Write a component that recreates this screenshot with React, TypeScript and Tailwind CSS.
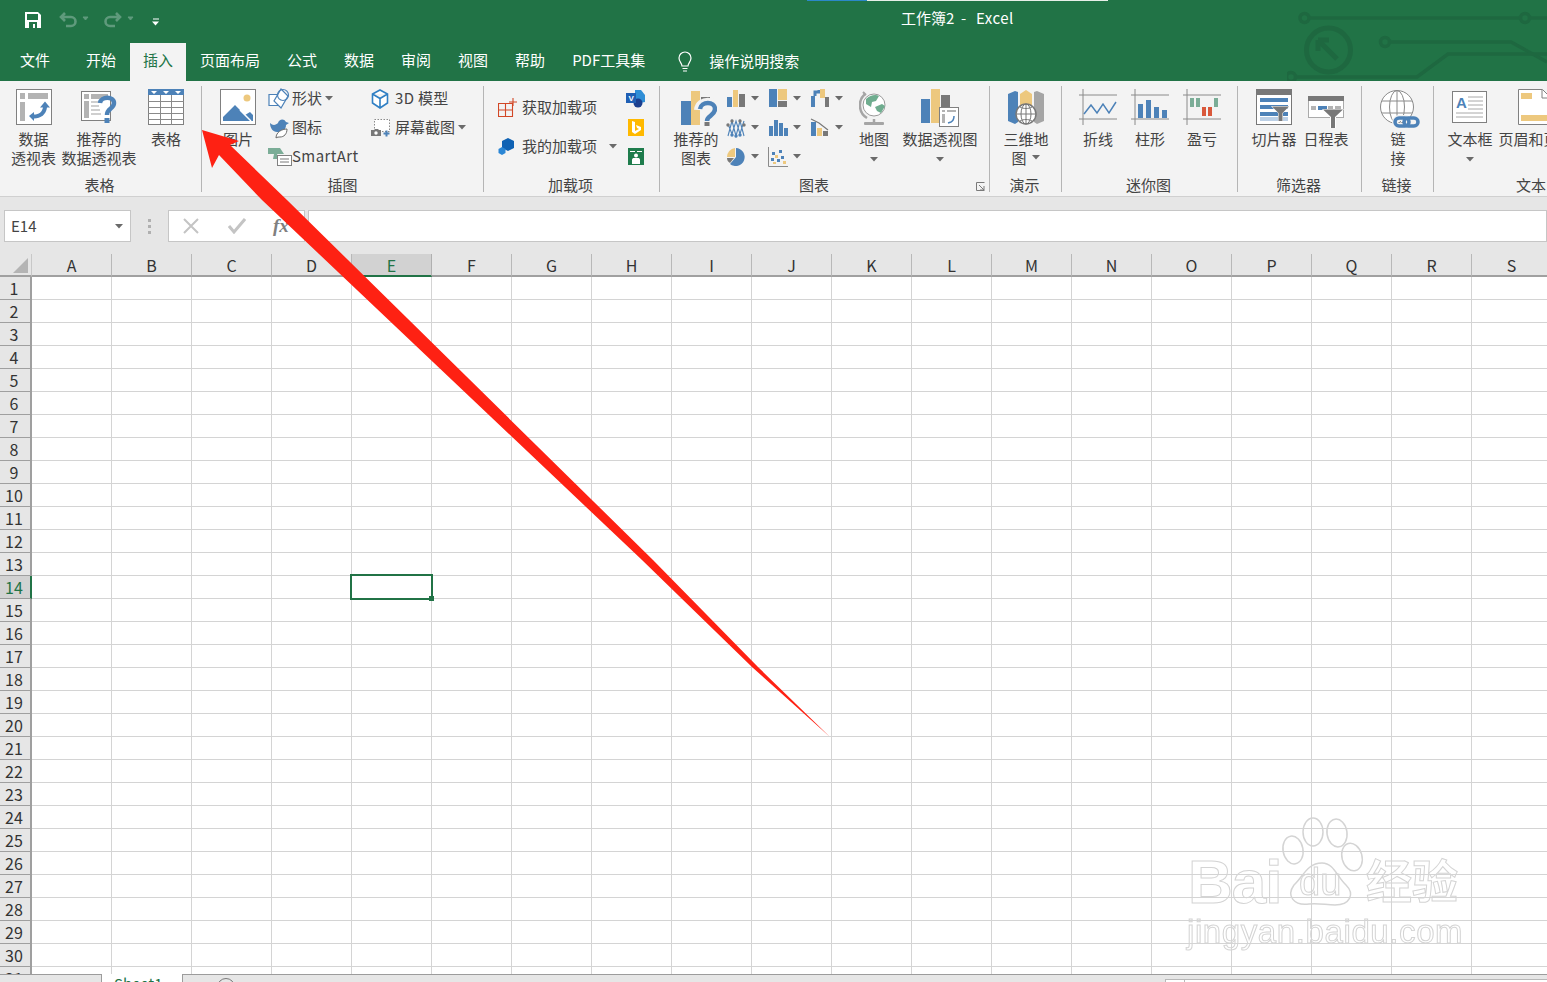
import React from "react";

const BLUE = "#4d82b8";
const TAN = "#edc87e";
const GRAY = "#787878";
const LIGHT = "#b3b3b3";

const columns = "ABCDEFGHIJKLMNOPQRS".split("");
const rows = Array.from({ length: 31 }, (_, i) => i + 1);

function Caret({ className = "" }: { className?: string }) {
  return (
    <svg width="8" height="5" viewBox="0 0 8 5" className={`shrink-0 ${className}`}>
      <path d="M0 0h8L4 4.500z" fill="#6a6a6a" />
    </svg>
  );
}

function Icon({ w = 36, h = 36, children }: { w?: number; h?: number; children: React.ReactNode }) {
  return (
    <svg width={w} height={h} viewBox={`0 0 ${w} ${h}`} className="shrink-0">
      {children}
    </svg>
  );
}

/* ================== Big ribbon icons ================== */

const PivotIcon = () => (
  <Icon>
    <rect x=".5" y=".5" width="35" height="35" fill="#fff" stroke="#808080" />
    <rect x="4" y="4" width="5" height="6" fill={LIGHT} />
    <rect x="12" y="4" width="20" height="6" fill={LIGHT} />
    <rect x="4" y="13" width="5" height="19" fill={LIGHT} />
    <path d="M13 27l5-4v2.500c5 0 8-2.500 9-7h-3l5-6 5 6h-3c-1 7-6 11-13 11v2.500z" fill={BLUE} />
  </Icon>
);

const RecommendPivotIcon = () => (
  <Icon>
    <rect x=".5" y="2.500" width="29" height="29" fill="#fff" stroke="#808080" />
    <rect x="3" y="5" width="5" height="5" fill={LIGHT} />
    <rect x="10" y="5" width="17" height="5" fill={LIGHT} />
    <rect x="3" y="12" width="5" height="17" fill={LIGHT} />
    <path d="M10 13h10M10 17h8M10 21h9M10 25h10" stroke="#cfcfcf" strokeWidth="2" />
    <path d="M19 14c1-7 14-7 14 0 0 6-7 5-7 12" fill="none" stroke={BLUE} strokeWidth="4.500" />
    <rect x="23.500" y="29" width="5" height="5" fill={BLUE} />
  </Icon>
);

const TableIcon = () => (
  <Icon>
    <rect x=".5" y=".5" width="35" height="35" fill="#fff" stroke="#808080" />
    <rect width="36" height="6" fill={BLUE} />
    <path d="M3 2h6L6 5zM15 2h6l-3 3zM27 2h6l-3 3z" fill="#fff" />
    <path d="M0 12.500h36M0 18.500h36M0 24.500h36M0 30.500h36M12.500 6v30M23.500 6v30" stroke="#8a8a8a" />
  </Icon>
);

const PictureIcon = () => (
  <Icon>
    <rect x=".5" y=".5" width="35" height="35" fill="#fff" stroke="#808080" />
    <circle cx="27" cy="9" r="3.500" fill={TAN} />
    <path d="M3 32v-4l12-12 10 10 5-3 3 3v6z" fill={BLUE} />
    <path d="M20 21l11 11" stroke="#fff" strokeWidth="1.500" />
  </Icon>
);

const RecommendChartIcon = () => (
  <Icon w={42} h={38}>
    <g transform="translate(6 2)">
      <rect x="0" y="10" width="10" height="24" fill={BLUE} />
      <rect x="10" y="0" width="9" height="34" fill={TAN} />
      <rect x="20" y="6" width="9" height="4" fill={GRAY} />
      <path d="M17 19c1-11 19-11 19 0 0 8-8 6-8 13" fill="none" stroke="#f3f3f3" strokeWidth="8" />
      <path d="M19 18c1-8 15-8 15 0 0 7-8 6-8 12" fill="none" stroke={BLUE} strokeWidth="4.500" />
      <rect x="23.500" y="31" width="5" height="4" fill={GRAY} />
    </g>
  </Icon>
);

const GlobeIcon = () => (
  <Icon w={30} h={38}>
    <circle cx="15" cy="16" r="11" fill="#fff" stroke="#9a9a9a" />
    <path d="M7 10c4-4 10-5 13-3l-3 5-4 1-1 5-5-3zM16 18l7-3 3 2-4 7-4-2z" fill="#6fad8f" />
    <path d="M6 5A15 15 0 0 0 8 29" fill="none" stroke="#a5a5a5" strokeWidth="2.500" />
    <path d="M4 3l3 3" stroke="#a5a5a5" strokeWidth="2" />
    <path d="M15 30v4" stroke="#a5a5a5" strokeWidth="2.500" />
    <rect x="5" y="33" width="20" height="3" rx="1" fill="#a5a5a5" />
  </Icon>
);

const PivotChartIcon = () => (
  <Icon w={38} h={38}>
    <rect x="0" y="10" width="9" height="24" fill={BLUE} />
    <rect x="10" y="0" width="9" height="34" fill={TAN} />
    <rect x="20" y="6" width="9" height="13" fill={GRAY} />
    <rect x="18.500" y="18.500" width="19" height="19" fill="#fff" stroke="#808080" />
    <path d="M21 21h3v2h-3zM26 21h9v2h-9zM21 25h3v9h-3z" fill={LIGHT} />
    <path d="M27 34l3-1c2-1 3-3 3-6" fill="none" stroke={BLUE} strokeWidth="1.500" />
  </Icon>
);

const Map3dIcon = () => (
  <Icon w={36} h={38}>
    <path d="M0 5l7-3 3 1v30l-3 2-7-3z" fill={BLUE} />
    <path d="M12 5l6-4 6 4v14H12z" fill={TAN} />
    <path d="M26 3l3-1 7 3v27l-7 3-3-2z" fill="#a5a5a5" />
    <circle cx="18" cy="25" r="10" fill="#fff" stroke={GRAY} strokeWidth="1.500" />
    <path d="M8 25h20M18 15v20M12 18c4 2 8 2 12 0M12 32c4-2 8-2 12 0" stroke={GRAY} fill="none" />
    <ellipse cx="18" cy="25" rx="5" ry="10" fill="none" stroke={GRAY} />
  </Icon>
);

const SparkFrame = () => (
  <path d="M4 0v36M0 6h38M0 30h38" stroke="#8a8a8a" fill="none" />
);

const SparkLineIcon = () => (
  <Icon w={38}>
    <SparkFrame />
    <path d="M5 25l7-9 6 8 6-9 6 9 7-11" fill="none" stroke={BLUE} strokeWidth="1.500" />
  </Icon>
);

const SparkColumnIcon = () => (
  <Icon w={38}>
    <SparkFrame />
    <path d="M7 15h5v14H7zM15 11h5v18h-5zM23 18h5v11h-5zM31 21h5v8h-5z" fill={BLUE} />
  </Icon>
);

const SparkWinLossIcon = () => (
  <Icon w={38}>
    <SparkFrame />
    <path d="M7 9h4v9H7zM13 9h4v9h-4zM31 9h4v9h-4z" fill="#7bad97" />
    <path d="M19 18h4v9h-4zM25 18h4v9h-4z" fill="#d9583b" />
  </Icon>
);

const SlicerIcon = () => (
  <Icon>
    <rect x=".5" y=".5" width="35" height="35" fill="#fff" stroke="#777" />
    <rect width="36" height="6" fill={GRAY} />
    <rect x="4" y="9" width="28" height="4" fill={BLUE} />
    <rect x="4" y="16" width="28" height="4" fill={BLUE} />
    <rect x="4" y="23" width="28" height="4" fill={BLUE} />
    <rect x="4" y="28" width="28" height="4" fill="#bcd0e6" />
    <path d="M15 17h19l-7 7v10h-5V24z" fill="#fff" />
    <path d="M16 17.500h17l-6.500 6.500v8h-4v-8z" fill={GRAY} />
  </Icon>
);

const TimelineIcon = () => (
  <Icon h={40}>
    <rect x=".5" y="7.500" width="35" height="21" fill="#fff" stroke="#aaa" />
    <rect y="7" width="36" height="5" fill={GRAY} />
    <path d="M3 17h5v4H3zM20 17h5v4h-5zM27 17h6v4h-6z" fill={LIGHT} />
    <path d="M10 17h5v4h-5zM15 17h4v4h-4z" fill={BLUE} />
    <path d="M14 20h22l-8 8v11h-6V28z" fill="#fff" />
    <path d="M15 20.500h20l-8 7.500v11h-4V28z" fill={GRAY} />
  </Icon>
);

const LinkIcon = () => (
  <Icon w={44} h={40}>
    <circle cx="21" cy="18" r="16.500" fill="#fff" stroke="#8a8a8a" />
    <ellipse cx="21" cy="18" rx="7.500" ry="16.500" fill="none" stroke="#8a8a8a" />
    <path d="M6 12h30M6 24h30M21 2v32" stroke="#8a8a8a" />
    <rect x="19" y="29" width="14" height="8" rx="4" fill="none" stroke="#f3f3f3" strokeWidth="6" />
    <rect x="19" y="29" width="14" height="8" rx="4" fill="none" stroke={BLUE} strokeWidth="3.500" />
    <rect x="28" y="29" width="14" height="8" rx="4" fill="none" stroke={BLUE} strokeWidth="3.500" />
  </Icon>
);

const TextBoxIcon = () => (
  <Icon>
    <rect x=".5" y="2.500" width="34" height="31" fill="#fff" stroke="#808080" />
    <text x="4" y="19" fontSize="15" fontWeight="700" fill={BLUE} fontFamily="Liberation Sans, sans-serif">A</text>
    <path d="M16 8h15M16 12h15M16 16h15M16 20h15M4 24h27M4 28h27" stroke="#a8a8a8" />
  </Icon>
);

const HeaderFooterIcon = () => (
  <Icon>
    <path d="M.5.500h24l8 8v27H.5z" fill="#fff" stroke="#808080" />
    <path d="M24 1v8h8" fill="#fff" stroke="#808080" />
    <rect x="3" y="4" width="11" height="6" fill={TAN} />
    <rect x="3" y="26" width="27" height="6" fill={TAN} />
  </Icon>
);

/* ================== Small ribbon icons ================== */

const ShapesIcon = () => (
  <Icon w={22} h={22}>
    <path d="M1 6.500h13v11H1z" fill="#fff" stroke={BLUE} strokeWidth="1.200" />
    <path d="M13 1l7 7-7 12-7-7z" fill="#fff" stroke={BLUE} strokeWidth="1.200" />
    <circle cx="15" cy="7" r="5.500" fill="none" stroke={BLUE} strokeWidth="1.200" />
  </Icon>
);

const BirdIcon = () => (
  <Icon w={22} h={22}>
    <path d="M2 6c3 3 6 2 8 0 1-4 6-5 8-1l3 1-3 2c0 5-4 7-9 7-4 0-7-4-7-9z" fill={BLUE} />
    <path d="M8 21c0-6 6-9 11-9 0 5-3 8-7 8-1 0-3 0-4 1z" fill="#fff" stroke="#6a6a6a" />
  </Icon>
);

const SmartArtIcon = () => (
  <Icon w={24} h={20}>
    <path d="M0 1h12l4 6h-7l2 5H5L6 7H0z" fill="#7bad97" />
    <rect x="9.500" y="8.500" width="14" height="10" fill="#fff" stroke="#808080" />
    <path d="M12 12h9M12 15h9" stroke={GRAY} />
  </Icon>
);

const CubeIcon = () => (
  <Icon w={18} h={20}>
    <path d="M9 1l7.500 4v9L9 19l-7.500-5V5zM1.500 5L9 9.500 16.500 5M9 9.500V19" fill="#fff" stroke="#2f7fc4" strokeWidth="1.600" />
  </Icon>
);

const ScreenshotIcon = () => (
  <Icon w={20} h={20}>
    <rect x="3.500" y="1.500" width="15" height="12" fill="#fff" stroke="#8a8a8a" strokeDasharray="1.500 1.500" />
    <path d="M0 12h3l1-1h3l1 1h2v6H0z" fill={GRAY} />
    <circle cx="5" cy="15" r="1.700" fill="#fff" />
    <path d="M15.500 12.500v6M12.500 15.500h6" stroke={BLUE} strokeWidth="2" />
  </Icon>
);

const StoreIcon = () => (
  <Icon w={20} h={20}>
    <path d="M.5 5.500h14v13H.5zM.5 12h14M7.500 5.500v13" fill="none" stroke="#d24726" strokeWidth="1.100" />
    <path d="M15 0v8M11 4h8" stroke="#d24726" strokeWidth="1.100" />
  </Icon>
);

const MyAddinIcon = () => (
  <Icon w={18} h={18}>
    <path d="M10 0l6 3v7l-6 3-6-3V3z" fill="#0f62b4" />
    <path d="M4 9l3.500 2v4L4 17l-3.500-2v-4z" fill="#2a86d5" />
  </Icon>
);

const VisioIcon = () => (
  <Icon w={20} h={18}>
    <path d="M9 0h6l4 5v7l-5 1-5-4z" fill="#2f8ed6" />
    <circle cx="12" cy="13" r="4.500" fill="#1b3f8f" />
    <rect y="3" width="10" height="10" fill="#1f5fb4" />
    <text x="2.500" y="11" fontSize="8" fontWeight="700" fill="#fff" fontFamily="Liberation Sans, sans-serif">V</text>
  </Icon>
);

const BingIcon = () => (
  <Icon w={16} h={17}>
    <rect width="16" height="17" fill="#ffb900" />
    <path d="M4 2l3 1v9l4-2-2-1-1-3 5 2v3l-6 4-3-2z" fill="#fff" />
  </Icon>
);

const PeopleGraphIcon = () => (
  <Icon w={16} h={17}>
    <rect width="16" height="17" fill="#1e7c4c" />
    <path d="M2 3h5v1H2zM9 3h5v1H9z" fill="#fff" />
    <circle cx="8" cy="7.500" r="2" fill="#fff" />
    <path d="M4 16v-4c0-1.500 1-2 2-2h4c1 0 2 .500 2 2v4z" fill="#fff" />
  </Icon>
);

function ChartGlyph({ type }: { type: string }) {
  return (
    <Icon w={20} h={20}>
      {type === "column" && (
        <>
          <rect x="1" y="8" width="5" height="10" fill={BLUE} />
          <rect x="7" y="1" width="5" height="17" fill={TAN} />
          <rect x="13" y="5" width="6" height="13" fill={GRAY} />
        </>
      )}
      {type === "tree" && (
        <>
          <rect x="1" y="0" width="8" height="18" fill={BLUE} />
          <rect x="10" y="0" width="9" height="11" fill={TAN} />
          <rect x="10" y="12" width="9" height="6" fill={GRAY} />
        </>
      )}
      {type === "water" && (
        <>
          <rect x="1" y="7" width="4" height="11" fill={BLUE} />
          <path d="M5 7V3h4V1" stroke={BLUE} strokeWidth="3" fill="none" />
          <rect x="10" y="0" width="5" height="9" fill={TAN} />
          <rect x="15" y="8" width="4" height="10" fill={GRAY} />
        </>
      )}
      {type === "line" && (
        <>
          <path d="M2 18L6 3l4 15 4-15 4 15M2 6l4 10 4-13 4 13 4-13" fill="none" stroke={BLUE} strokeWidth="1.100" />
          <circle cx="6" cy="3" r="1.700" fill={GRAY} />
          <circle cx="14" cy="3" r="1.700" fill={GRAY} />
          <circle cx="2" cy="7" r="1.700" fill={GRAY} />
          <circle cx="18" cy="7" r="1.700" fill={GRAY} />
          <circle cx="6" cy="17" r="1.700" fill={BLUE} />
          <circle cx="14" cy="17" r="1.700" fill={BLUE} />
          <circle cx="10" cy="18" r="1.700" fill={BLUE} />
        </>
      )}
      {type === "hist" && (
        <path d="M1 8h4v10H1zM6 2h4v16H6zM11 5h4v13h-4zM16 10h4v8h-4z" fill={BLUE} />
      )}
      {type === "pareto" && (
        <>
          <rect x="1" y="4" width="5" height="14" fill={BLUE} />
          <rect x="7" y="10" width="5" height="8" fill={TAN} />
          <rect x="13" y="13" width="5" height="5" fill={GRAY} />
          <path d="M1 1l8 4 9 7" fill="none" stroke={GRAY} strokeWidth="1.200" />
        </>
      )}
      {type === "pie" && (
        <>
          <path d="M10 1a9 9 0 1 1-6 16l6-7z" fill={BLUE} />
          <path d="M9 1a9 9 0 0 0-8 9h8z" fill={TAN} />
          <path d="M1 11h7l-4 5c-2-1-3-3-3-5z" fill={GRAY} />
        </>
      )}
      {type === "scatter" && (
        <>
          <path d="M.5 0v19.500H20" fill="none" stroke="#8a8a8a" />
          <path d="M4 5h3v3H4zM11 3h3v3h-3zM3 11h3v3H3zM13 9h3v3h-3zM9 12h3v3H9z" fill={BLUE} />
          <path d="M7 8h3v3H7zM15 14h3v3h-3zM5 15h3v2H5z" fill={TAN} />
        </>
      )}
    </Icon>
  );
}

/* ================== Ribbon layout ================== */

function Group({ width, label, labelClass = "pr-[3px]", children }: any) {
  return (
    <div className="relative flex h-full shrink-0 flex-col" style={{ width }}>
      <div className="flex h-[94px] min-w-0">{children}</div>
      <div className={`text-center text-[15px] leading-[20px] ${labelClass}`}>{label}</div>
      <div className="absolute right-0 top-[5px] h-[106px] w-px bg-[#b5b5b5]" />
    </div>
  );
}

function Big({ width, icon, lines, caret, iconH = 38 }: any) {
  return (
    <div className="flex shrink-0 flex-col items-center pt-[8px]" style={{ width }}>
      <div className="flex items-start justify-center" style={{ height: iconH }}>
        {icon}
      </div>
      <div className="mt-[2px] whitespace-nowrap text-center text-[15px] leading-[19px]">
        {lines.map((l: React.ReactNode, i: number) => (
          <div key={i}>{l}</div>
        ))}
      </div>
      {caret && <Caret className="mt-[9px]" />}
    </div>
  );
}

function Small({ icon, text, caret, iconBox = "w-[24px]", className = "" }: any) {
  return (
    <div className={`flex h-[29px] items-center whitespace-nowrap text-[15px] ${className}`}>
      <div className={`flex shrink-0 items-center ${iconBox}`}>{icon}</div>
      <span>{text}</span>
      {caret && <Caret className="ml-[3px]" />}
    </div>
  );
}

function ChartPick({ type }: { type: string }) {
  return (
    <div className="flex h-[29px] w-[42px] items-center gap-[5px]">
      <ChartGlyph type={type} />
      <Caret />
    </div>
  );
}

function Ribbon() {
  return (
    <div className="flex h-[115px] shrink-0 overflow-hidden bg-[#f3f3f3] text-[#444444]">
      <Group width={202} label="表格">
        <div className="w-[7px]" />
        <Big width={53} icon={<PivotIcon />} lines={["数据", "透视表"]} />
        <Big width={78} icon={<RecommendPivotIcon />} lines={["推荐的", "数据透视表"]} />
        <Big width={56} icon={<TableIcon />} lines={["表格"]} />
      </Group>

      <Group width={282} label="插图" labelClass="pr-[1px]">
        <div className="w-[14px]" />
        <Big width={44} icon={<PictureIcon />} lines={["图片"]} />
        <div className="ml-[8px] w-[103px] pt-[3px]">
          <Small icon={<ShapesIcon />} text="形状" caret />
          <Small icon={<BirdIcon />} text="图标" />
          <Small icon={<SmartArtIcon />} text={<span className="tracking-[0.4px]">SmartArt</span>} />
        </div>
        <div className="pt-[3px]">
          <Small icon={<CubeIcon />} text={<span className="tracking-[0.3px]">3D 模型</span>} />
          <Small icon={<ScreenshotIcon />} text="屏幕截图" caret />
        </div>
      </Group>

      <Group width={176} label="加载项">
        <div className="w-[131px] pl-[14px] pt-[12px]">
          <Small icon={<StoreIcon />} text="获取加载项" />
          <div className="h-[10px]" />
          <div className="flex items-center">
            <Small icon={<MyAddinIcon />} text="我的加载项" />
            <Caret className="ml-[12px]" />
          </div>
        </div>
        <div className="flex flex-col items-center pl-[11px] pt-[3px]">
          <div className="flex h-[29px] items-center"><VisioIcon /></div>
          <div className="flex h-[29px] items-center"><BingIcon /></div>
          <div className="flex h-[29px] items-center"><PeopleGraphIcon /></div>
        </div>
      </Group>

      <Group width={330} label="图表" labelClass="pr-[22px]">
        <div className="w-[11px]" />
        <Big width={50} icon={<RecommendChartIcon />} lines={["推荐的", "图表"]} />
        <div className="ml-[5px] grid h-[87px] grid-cols-[42px_42px_42px] pt-[3px]">
          {["column", "tree", "water", "line", "hist", "pareto", "pie", "scatter"].map((t) => (
            <ChartPick key={t} type={t} />
          ))}
        </div>
        <Big width={44} icon={<GlobeIcon />} lines={["地图"]} caret />
        <div className="w-[5px]" />
        <Big width={78} icon={<PivotChartIcon />} lines={["数据透视图"]} caret />
        <svg width="9" height="9" viewBox="0 0 9 9" className="absolute bottom-[5px] right-[5px]">
          <path d="M.5 8.500v-8h8M3 3l5 5M8 4v4H4M.5 8.500h8" fill="none" stroke="#7a7a7a" />
        </svg>
      </Group>

      <Group width={72} label="演示">
        <Big
          width={72}
          icon={<Map3dIcon />}
          lines={[
            "三维地",
            <span key="m" className="flex items-center justify-center gap-[5px] pr-[1px]">
              图
              <Caret />
            </span>,
          ]}
        />
      </Group>

      <Group width={176} label="迷你图">
        <div className="w-[10px]" />
        <Big width={52} icon={<SparkLineIcon />} lines={["折线"]} />
        <Big width={52} icon={<SparkColumnIcon />} lines={["柱形"]} />
        <Big width={52} icon={<SparkWinLossIcon />} lines={["盈亏"]} />
      </Group>

      <Group width={124} label="筛选器">
        <div className="w-[11px]" />
        <Big width={50} icon={<SlicerIcon />} lines={["切片器"]} />
        <Big width={54} icon={<TimelineIcon />} lines={["日程表"]} />
      </Group>

      <Group width={72} label="链接">
        <Big width={72} iconH={38} icon={<LinkIcon />} lines={["链", "接"]} />
      </Group>

      <Group width={200} label="文本" labelClass="pr-[6px]">
        <div className="w-[10px]" />
        <Big width={52} icon={<TextBoxIcon />} lines={["文本框"]} caret />
        <Big width={80} icon={<HeaderFooterIcon />} lines={["页眉和页脚"]} />
      </Group>
    </div>
  );
}

/* ================== Title + tabs ================== */

function CircuitBackdrop() {
  return (
    <svg width="260" height="81" viewBox="0 0 260 81" className="absolute right-0 top-0" fill="none" stroke="#1e6840" strokeWidth="3.500">
      <circle cx="17.500" cy="18" r="4.500" />
      <path d="M22 18h211" />
      <circle cx="238" cy="18" r="4.500" />
      <path d="M243 18h17" />
      <circle cx="41.500" cy="50" r="22" strokeWidth="5" />
      <path d="M31 40l19 19M31 40v11M31 40h11" strokeWidth="5" />
      <circle cx="98" cy="42" r="4.500" />
      <path d="M103 42h121l36 20" />
      <circle cx="4" cy="77" r="4.500" />
      <path d="M9 77h121l31-23h99" />
    </svg>
  );
}

function TitleBar() {
  return (
    <div className="relative flex h-[43px] shrink-0 items-start">
      <div className="absolute left-[807px] top-0 h-px w-[60px] bg-[#2b88c8]" />
      <div className="absolute left-[867px] top-0 h-px w-[241px] bg-[#e8efe9]" />
      <div className="ml-[25px] mt-[12px] flex items-center">
        <svg width="16" height="16" viewBox="0 0 16 16">
          <path d="M0 0h13l3 3v13H0z" fill="#fff" />
          <rect x="2" y="2" width="11" height="6" fill="#217346" />
          <rect x="4" y="10" width="8" height="6" fill="#217346" />
          <rect x="8" y="12" width="2" height="4" fill="#fff" />
        </svg>
        <svg width="30" height="16" viewBox="0 0 30 16" className="ml-[18px]" fill="none" stroke="#5f9a7c" strokeWidth="2.600">
          <path d="M2 5h10a4.500 4.500 0 0 1 0 9H7M6 1L2 5l4 4" />
          <path d="M24 5l5 0-2.500 3z" fill="#5f9a7c" strokeWidth="1" />
        </svg>
        <svg width="32" height="16" viewBox="0 0 32 16" className="ml-[13px]" fill="none" stroke="#5f9a7c" strokeWidth="2.600">
          <path d="M18 5H8a4.500 4.500 0 0 0 0 9h5M14 1l4 4-4 4" />
          <path d="M26 5l5 0-2.500 3z" fill="#5f9a7c" strokeWidth="1" />
        </svg>
        <svg width="8" height="8" viewBox="0 0 8 8" className="ml-[18px] mt-[3px]">
          <path d="M1 .500h6v1H1zM0 3.500h7L3.500 7.500z" fill="#fff" />
        </svg>
      </div>
      <div className="absolute left-[901px] top-[8px] whitespace-nowrap text-[15px] leading-[20px] text-white">
        工作簿2&nbsp;&nbsp;-&nbsp;&nbsp;<span className="ml-[3px] tracking-[0.5px]">Excel</span>
      </div>
    </div>
  );
}

function Tabs() {
  const tabs = ["开始", "插入", "页面布局", "公式", "数据", "审阅", "视图", "帮助", "PDF工具集"];
  return (
    <div className="relative flex h-[38px] shrink-0 text-[15px] text-white">
      <div className="flex w-[73px] shrink-0 items-center pl-[20px] pb-[3px]">文件</div>
      <div className="flex gap-px">
        {tabs.map((t) => (
          <div
            key={t}
            className={`flex items-center whitespace-nowrap px-[13px] pb-[3px] ${t === "插入" ? "bg-[#f3f3f3] text-[#217346]" : ""}`}
          >
            {t}
          </div>
        ))}
      </div>
      <div className="ml-[18px] flex items-center pb-[1px]">
        <svg width="18" height="22" viewBox="0 0 18 22" fill="none" stroke="#fff" strokeWidth="1.200">
          <path d="M6 15c0-3-3-4-3-8a6 6 0 0 1 12 0c0 4-3 5-3 8z" />
          <path d="M6.500 17.500h5M7 20h4" />
        </svg>
        <span className="ml-[15px]">操作说明搜索</span>
      </div>
    </div>
  );
}

/* ================== Formula bar + sheet ================== */

function FormulaBar() {
  return (
    <div className="flex h-[45px] shrink-0 bg-[#e6e6e6] pl-[4px] pt-[13px]">
      <div className="flex h-[32px] w-[127px] items-center justify-between border border-[#c6c6c6] bg-white pl-[6px] pr-[7px] text-[15px] text-[#444444]">
        E14
        <Caret />
      </div>
      <div className="flex w-[37px] flex-col items-center justify-center gap-[3px]">
        <div className="h-[3px] w-[3px] bg-[#b0b0b0]" />
        <div className="h-[3px] w-[3px] bg-[#b0b0b0]" />
        <div className="h-[3px] w-[3px] bg-[#b0b0b0]" />
      </div>
      <div className="flex h-[32px] w-[137px] items-center border border-[#c6c6c6] bg-white">
        <svg width="16" height="16" viewBox="0 0 16 16" className="ml-[14px]" fill="none" stroke="#c4c4c4" strokeWidth="2">
          <path d="M1 1l14 14M15 1L1 15" />
        </svg>
        <svg width="18" height="16" viewBox="0 0 18 16" className="ml-[29px]" fill="none" stroke="#c4c4c4" strokeWidth="3">
          <path d="M1 8l5 6L17 1" />
        </svg>
        <span className="ml-[27px] font-['Liberation_Serif',serif] text-[19px] font-bold italic text-[#808080]">fx</span>
      </div>
      <div className="ml-[3px] h-[32px] flex-1 border border-[#c6c6c6] bg-white" />
    </div>
  );
}

function Sheet() {
  return (
    <div className="min-h-0 flex-1 overflow-hidden bg-[#e6e6e6] pt-[12px]">
      <div className="grid grid-cols-[32px_repeat(19,80px)] auto-rows-[23px]">
        <div className="relative border-b-2 border-r border-b-[#a0a0a0] border-r-[#c8c8c8]">
          <svg width="16" height="16" viewBox="0 0 16 16" className="absolute left-[13px] top-[4px]">
            <path d="M15 0v15H0z" fill="#b4b4b4" />
          </svg>
        </div>
        {columns.map((c) => (
          <div
            key={c}
            className={`flex items-center justify-center border-b-2 border-r pt-[1px] text-[16px] ${
              c === "E"
                ? "border-b-[#217346] border-r-[#b0b0b0] bg-[#d2d2d2] text-[#217346]"
                : "border-b-[#a0a0a0] border-r-[#b8b8b8] text-[#333333]"
            }`}
          >
            {c}
          </div>
        ))}
        {rows.map((r) => (
          <React.Fragment key={r}>
            <div
              className={`flex items-center justify-center border-b border-r-2 pr-[2px] text-[16px] ${
                r === 14
                  ? "border-b-[#9a9a9a] border-r-[#217346] bg-[#d2d2d2] text-[#217346]"
                  : "border-b-[#9f9f9f] border-r-[#9f9f9f] text-[#333333]"
              }`}
            >
              {r}
            </div>
            {columns.map((c) => (
              <div key={c} className="relative border-b border-r border-[#d4d4d4] bg-white">
                {c === "E" && r === 14 && (
                  <div className="absolute -left-[2px] -top-[2px] z-10 h-[26px] w-[83px] border-2 border-[#217346]">
                    <div className="absolute -bottom-[3px] -right-[3px] h-[5px] w-[5px] bg-[#217346]" />
                  </div>
                )}
              </div>
            ))}
          </React.Fragment>
        ))}
      </div>
    </div>
  );
}

function SheetTabs() {
  return (
    <div className="flex h-[8px] shrink-0 bg-[#e6e6e6]">
      <div className="w-[102px] border-t border-r border-[#9c9c9c]" />
      <div className="w-[80px] overflow-hidden bg-white pl-[12px] text-[15px] leading-[20px] text-[#217346]">
        Sheet1
      </div>
      <div className="relative flex-1 border-l border-t border-[#9c9c9c]">
        <div className="absolute left-[34px] top-[3px] h-[18px] w-[18px] rounded-full border border-[#7a7a7a]" />
        <div className="absolute left-[982px] top-[4px] h-[4px] w-[383px] border-l border-t border-[#b8b8b8] bg-white" />
        <div className="absolute left-[1001px] top-[4px] h-[4px] w-px bg-[#b8b8b8]" />
      </div>
    </div>
  );
}

/* ================== Overlays ================== */

function Watermark() {
  const letters = "font-['Liberation_Sans',sans-serif] text-transparent [-webkit-text-stroke:1px_#d4d4d4]";
  return (
    <div className="pointer-events-none absolute left-[1180px] top-[812px] h-[145px] w-[290px] blur-[0.4px]">
      <svg width="110" height="100" viewBox="0 0 110 100" className="absolute left-[85px] top-[3px]" fill="none" stroke="#d4d4d4" strokeWidth="1.500">
        <ellipse cx="28" cy="35" rx="10" ry="14" transform="rotate(-10 28 35)" />
        <ellipse cx="48" cy="17" rx="10" ry="14" />
        <ellipse cx="72" cy="18" rx="10" ry="14" transform="rotate(-8 72 18)" />
        <ellipse cx="87" cy="42" rx="10" ry="14" transform="rotate(-15 87 42)" />
        <path d="M57 48c12 0 15 14 24 22 9 9 4 20-11 20-9 0-16-2-26-1-15 2-23-8-15-19 9-8 13-22 28-22z" />
      </svg>
      <div className={`absolute left-[8px] top-[30px] text-[62px] font-bold leading-[80px] tracking-[-1px] ${letters}`}>Bai</div>
      <div className={`absolute left-[119px] top-[50px] text-[38px] leading-[40px] ${letters}`}>du</div>
      <div className="absolute left-[186px] top-[38px] font-['Noto_Sans_CJK_SC',sans-serif] text-[46px] font-bold leading-[56px] text-transparent [-webkit-text-stroke:1px_#d4d4d4]">
        经验
      </div>
      <div className={`absolute left-[7px] top-[100px] whitespace-nowrap text-[33px] leading-[40px] tracking-[0.6px] ${letters}`}>
        jingyan.baidu.com
      </div>
    </div>
  );
}

function RedArrow() {
  return (
    <svg width="1547" height="982" viewBox="0 0 1547 982" className="pointer-events-none absolute left-0 top-0 z-20">
      <path d="M202 130L239 141 230 145 287 200 653 560 758 667 830 737 752 667 642 560 262 200 219 155 212 168z" fill="#fe2113" />
    </svg>
  );
}

export default function App() {
  return (
    <div className="relative flex h-[982px] w-[1547px] flex-col overflow-hidden bg-[#217346] font-['Noto_Sans_CJK_SC','Noto_Sans',sans-serif]">
      <CircuitBackdrop />
      <TitleBar />
      <Tabs />
      <Ribbon />
      <div className="h-px shrink-0 bg-[#d0d0d0]" />
      <FormulaBar />
      <Sheet />
      <SheetTabs />
      <Watermark />
      <RedArrow />
    </div>
  );
}
